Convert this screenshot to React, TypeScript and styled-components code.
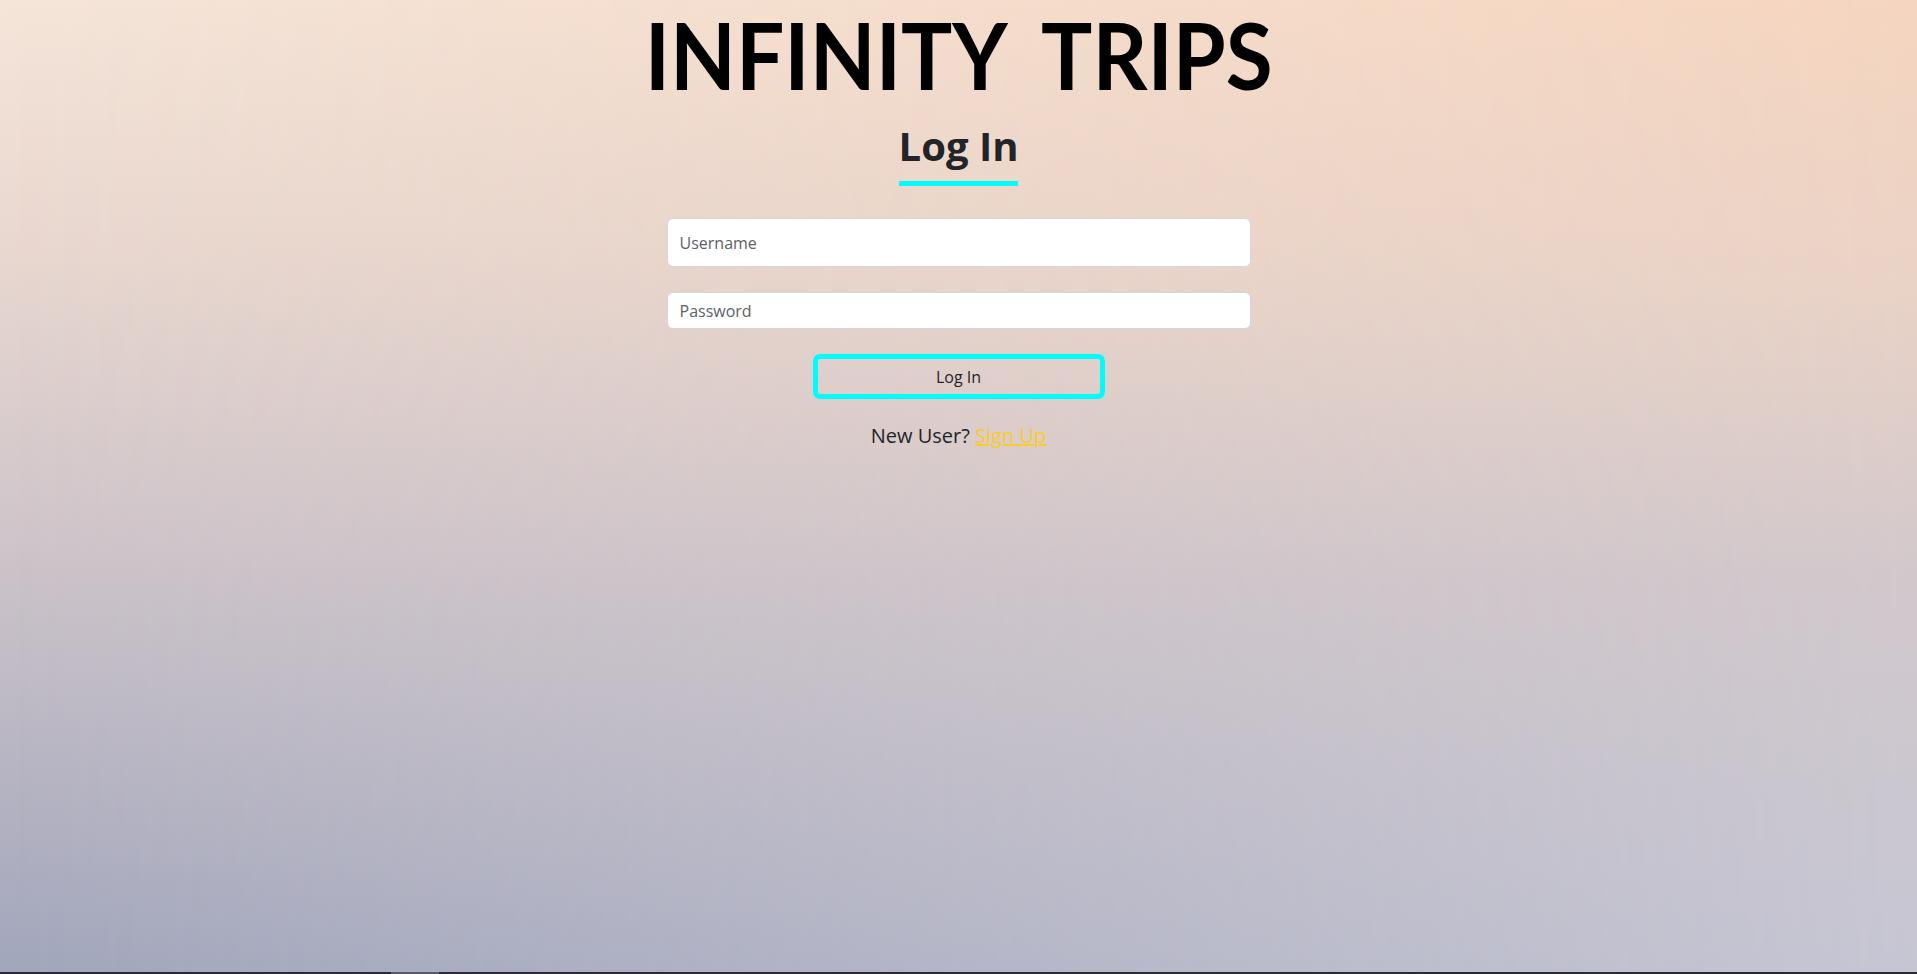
import React from "react";
import styled, { createGlobalStyle } from "styled-components";

const GlobalStyle = createGlobalStyle`
  * {
    box-sizing: border-box;
  }

  html,
  body {
    margin: 0;
    padding: 0;
    height: 100%;
  }

  body {
    font-family: "Open Sans", "Noto Sans", Arial, sans-serif;
    color: #212529;
    overflow: hidden;
  }
`;

const Page = styled.div`
  position: relative;
  isolation: isolate;
  display: flex;
  flex-direction: column;
  min-height: 100vh;
  background: linear-gradient(to bottom, #f5e5d9 0%, #e9d8d0 25%, #cfc5ca 55%, #a1a6bc 100%);

  /* right-hand colours, faded in from the left */
  &::before {
    content: "";
    position: absolute;
    inset: 0;
    z-index: -1;
    background: linear-gradient(to bottom, #f5d5bf 0%, #e9d2c6 30%, #d1c8cc 60%, #c6c6d3 100%);
    -webkit-mask-image: linear-gradient(to right, transparent 0%, black 100%);
    mask-image: linear-gradient(to right, transparent 0%, black 100%);
  }
`;

const Main = styled.main`
  flex: 1;
  display: flex;
  flex-direction: column;
  align-items: center;
  padding-top: 9px;
`;

const Brand = styled.h1`
  margin: 0;
  font-family: Lato, "Open Sans", sans-serif;
  font-weight: 700;
  font-size: 92px;
  line-height: 1;
  word-spacing: 20px;
  color: #000;
  transform: scaleX(0.93);
`;

const Heading = styled.h2`
  margin: 21px 0 0;
  padding-bottom: 11px;
  font-size: 40px;
  font-weight: 700;
  line-height: 1.2;
  color: #212529;
  border-bottom: 5px solid #00fdfd;
`;

const Form = styled.form`
  width: 584px;
  margin-top: 32px;
  display: flex;
  flex-direction: column;
  align-items: center;
`;

const Input = styled.input<{ $tall?: boolean }>`
  width: 100%;
  height: ${(p) => (p.$tall ? "49px" : "37px")};
  margin-bottom: ${(p) => (p.$tall ? "25px" : "25px")};
  padding: 0 12px;
  font-family: inherit;
  font-size: 16px;
  color: #212529;
  background: #fff;
  border: 1px solid #d6d6d9;
  border-radius: 6px;
  outline: none;

  &::placeholder {
    color: #5d6166;
  }
`;

const SubmitButton = styled.button`
  width: 292px;
  height: 45px;
  display: flex;
  align-items: center;
  justify-content: center;
  font-family: inherit;
  font-size: 16px;
  color: #212529;
  background: transparent;
  border: 5px solid #00fdfd;
  border-radius: 7px;
  cursor: pointer;
`;

const SignUpLine = styled.p`
  margin: 22px 0 0;
  font-size: 20px;
  line-height: 1.5;
  color: #212529;
`;

const SignUpLink = styled.a`
  color: #f8cb2c;
  text-decoration: underline;
`;

const ScrollTrack = styled.div`
  height: 2px;
  background: #2a2b30;
  display: flex;
`;

const ScrollThumb = styled.div`
  width: 48px;
  margin-left: 391px;
  background: #5b5b60;
`;

const App: React.FC = () => {
  return (
    <>
      <GlobalStyle />
      <Page>
        <Main>
          <Brand>INFINITY TRIPS</Brand>
          <Heading>Log In</Heading>
          <Form onSubmit={(e) => e.preventDefault()}>
            <Input $tall type="text" placeholder="Username" />
            <Input type="password" placeholder="Password" />
            <SubmitButton type="submit">Log In</SubmitButton>
          </Form>
          <SignUpLine>
            New User? <SignUpLink href="#">Sign Up</SignUpLink>
          </SignUpLine>
        </Main>
        <ScrollTrack>
          <ScrollThumb />
        </ScrollTrack>
      </Page>
    </>
  );
};

export default App;
